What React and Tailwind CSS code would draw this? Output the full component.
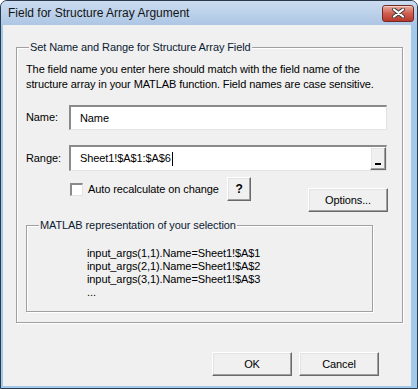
import React from "react";

const FONT = "font-['Liberation_Sans',Arial,sans-serif]";

function ClassicButton({ className = "", children }) {
  return (
    <button
      type="button"
      className={`flex items-center justify-center bg-[#f0f0f0] border border-t-white border-l-white border-b-[#696969] border-r-[#696969] shadow-[inset_-1px_-1px_0_#a0a0a0,inset_1px_1px_0_#e3e3e3] text-[11px] tracking-[-0.1px] text-black ${className}`}
    >
      {children}
    </button>
  );
}

function GroupBox({ label, className = "", children }) {
  return (
    <div
      className={`relative border border-[#a0a0a0] shadow-[inset_1px_1px_0_#ffffff,1px_1px_0_#ffffff] ${className}`}
    >
      <span className="absolute -top-[8px] left-[12px] px-[1px] bg-[#f0f0f0] leading-[15px] text-[#0c1a33] whitespace-nowrap">
        {label}
      </span>
      {children}
    </div>
  );
}

function SunkenInput({ value, caret, children }) {
  return (
    <div className="flex items-center w-[318px] bg-white border-t-2 border-l-2 border-r border-b border-t-[#8a8a8a] border-l-[#8a8a8a] border-r-[#e3e3e3] border-b-[#e3e3e3] h-full">
      <span className="pl-[9px] flex items-center">
        {value}
        {caret && <span className="inline-block w-[1px] h-[14px] bg-black ml-[1px]"></span>}
      </span>
      {children}
    </div>
  );
}

export default function App() {
  return (
    <div className={`w-[418px] h-[389px] ${FONT} text-[11px] text-black`}>
      <div className="w-full h-full flex flex-col bg-[#a3c9ea] border border-[#2b3a4d] rounded-t-[7px] overflow-hidden">
        {/* title bar */}
        <div className="h-[24px] shrink-0 flex items-center justify-between pl-[7px] pr-[3px] bg-gradient-to-b from-[#cbdcf0] to-[#adc6e4]">
          <span className="text-[12px] text-[#141414]">Field for Structure Array Argument</span>
          <div className="w-[32px] h-[17px] rounded-[3px] border border-[#6e2a23] bg-gradient-to-b from-[#e6aa9d] via-[#cf5e51] to-[#b8392b] flex items-center justify-center shadow-[inset_0_1px_0_#f3cfc6]">
            <svg width="15" height="10" viewBox="0 0 15 10">
              <path d="M3 1.5 L12 8.5 M12 1.5 L3 8.5" stroke="#3d3d3d" strokeWidth="4" strokeLinecap="round" />
              <path d="M3 1.5 L12 8.5 M12 1.5 L3 8.5" stroke="#ffffff" strokeWidth="2.2" strokeLinecap="round" />
            </svg>
          </div>
        </div>

        {/* client area */}
        <div className="flex-1 flex pl-[2px] pr-[6px] pb-[2px] tracking-[-0.1px]">
          <div className="flex-1 bg-[#f0f0f0] flex flex-col pl-[13px] pt-[22px]">
            <GroupBox
              label="Set Name and Range for Structure Array Field"
              className="w-[387px] h-[276px] pt-[14px] pl-[9px] pr-[14px]"
            >
              <p className="leading-[15px] whitespace-nowrap">
                The field name you enter here should match with the field name of the
                <br />
                structure array in your MATLAB function. Field names are case sensitive.
              </p>

              <div className="flex items-center mt-[13px] h-[25px]">
                <span className="w-[43px]">Name:</span>
                <SunkenInput value="Name" />
              </div>

              <div className="flex items-center mt-[15px] h-[26px]">
                <span className="w-[43px] self-start pt-[5px]">Range:</span>
                <SunkenInput value="Sheet1!$A$1:$A$6" caret>
                  <ClassicButton className="ml-auto w-[16px] h-full items-end pb-[4px]">
                    <span className="block w-[6px] h-[2px] bg-black"></span>
                  </ClassicButton>
                </SunkenInput>
              </div>

              <div className="flex items-start mt-[6px]">
                <div className="flex items-center pl-[44px] h-[24px]">
                  <span className="w-[13px] h-[13px] bg-white border-t-2 border-l-2 border-r border-b border-t-[#8a8a8a] border-l-[#8a8a8a] border-r-[#e3e3e3] border-b-[#e3e3e3]"></span>
                  <span className="ml-[5px] w-[139px] whitespace-nowrap">Auto recalculate on change</span>
                  <ClassicButton className="w-[24px] h-[24px] font-bold text-[12px]">?</ClassicButton>
                </div>
                <ClassicButton className="ml-auto mt-[11px] w-[80px] h-[24px]">Options...</ClassicButton>
              </div>

              <GroupBox
                label="MATLAB representation of your selection"
                className="mt-[13px] w-[347px] h-[87px] pt-[21px] pl-[60px]"
              >
                <div className="leading-[13px]">
                  <div>input_args(1,1).Name=Sheet1!$A$1</div>
                  <div>input_args(2,1).Name=Sheet1!$A$2</div>
                  <div>input_args(3,1).Name=Sheet1!$A$3</div>
                  <div>...</div>
                </div>
              </GroupBox>
            </GroupBox>

            <div className="flex gap-[7px] mt-[29px] pl-[196px]">
              <ClassicButton className="w-[80px] h-[24px]">OK</ClassicButton>
              <ClassicButton className="w-[80px] h-[24px]">Cancel</ClassicButton>
            </div>
          </div>
        </div>
      </div>
    </div>
  );
}
